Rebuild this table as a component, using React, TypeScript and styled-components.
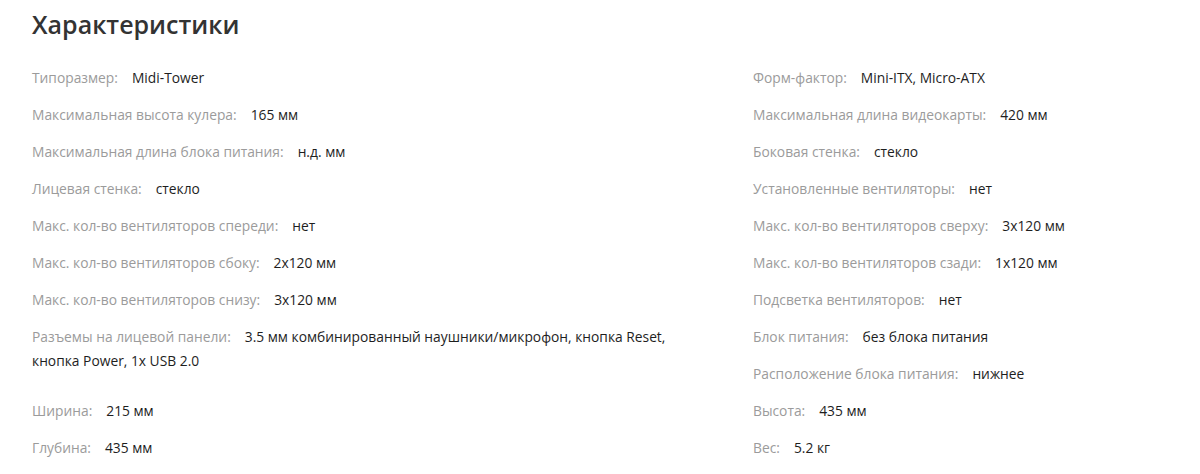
import { createGlobalStyle, styled } from 'styled-components';

interface Spec {
  label: string;
  value: string;
  tall?: boolean;
}

const leftSpecs: Spec[] = [
  { label: 'Типоразмер', value: 'Midi-Tower' },
  { label: 'Максимальная высота кулера', value: '165 мм' },
  { label: 'Максимальная длина блока питания', value: 'н.д. мм' },
  { label: 'Лицевая стенка', value: 'стекло' },
  { label: 'Макс. кол-во вентиляторов спереди', value: 'нет' },
  { label: 'Макс. кол-во вентиляторов сбоку', value: '2x120 мм' },
  { label: 'Макс. кол-во вентиляторов снизу', value: '3x120 мм' },
  {
    label: 'Разъемы на лицевой панели',
    value: '3.5 мм комбинированный наушники/микрофон, кнопка Reset, кнопка Power, 1x USB 2.0',
    tall: true,
  },
  { label: 'Ширина', value: '215 мм' },
  { label: 'Глубина', value: '435 мм' },
];

const rightSpecs: Spec[] = [
  { label: 'Форм-фактор', value: 'Mini-ITX, Micro-ATX' },
  { label: 'Максимальная длина видеокарты', value: '420 мм' },
  { label: 'Боковая стенка', value: 'стекло' },
  { label: 'Установленные вентиляторы', value: 'нет' },
  { label: 'Макс. кол-во вентиляторов сверху', value: '3x120 мм' },
  { label: 'Макс. кол-во вентиляторов сзади', value: '1x120 мм' },
  { label: 'Подсветка вентиляторов', value: 'нет' },
  { label: 'Блок питания', value: 'без блока питания' },
  { label: 'Расположение блока питания', value: 'нижнее' },
  { label: 'Высота', value: '435 мм' },
  { label: 'Вес', value: '5.2 кг' },
];

const SpecColumn = ({ specs }: { specs: Spec[] }) => (
  <Column>
    {specs.map((spec) => (
      <Item key={spec.label} $tall={spec.tall}>
        <Label>{spec.label}:</Label>
        <Value>{spec.value}</Value>
      </Item>
    ))}
  </Column>
);

export default function App() {
  return (
    <>
      <GlobalStyle />
      <Section>
        <Title>Характеристики</Title>
        <Grid>
          <SpecColumn specs={leftSpecs} />
          <SpecColumn specs={rightSpecs} />
        </Grid>
      </Section>
    </>
  );
}

const GlobalStyle = createGlobalStyle`
  body {
    margin: 0;
    background: #fff;
    font-family: 'Open Sans', 'Noto Sans', sans-serif;
  }
`;

const Section = styled.section`
  padding: 6px 32px 0 32px;
`;

const Title = styled.h2`
  margin: 0;
  font-size: 25px;
  line-height: 36px;
  font-weight: 600;
  color: #333;
`;

const Grid = styled.div`
  display: grid;
  grid-template-columns: 640px 1fr;
  column-gap: 81px;
  margin-top: 24px;
`;

const Column = styled.div`
  display: grid;
  grid-auto-rows: 37px;
`;

const Item = styled.div<{ $tall?: boolean }>`
  grid-row: ${(p) => (p.$tall ? 'span 2' : 'span 1')};
  font-size: 13.8px;
  line-height: 24px;
`;

const Label = styled.span`
  color: #9b9b9b;
  margin-right: 14px;
`;

const Value = styled.span`
  color: #1e1e1e;
`;
